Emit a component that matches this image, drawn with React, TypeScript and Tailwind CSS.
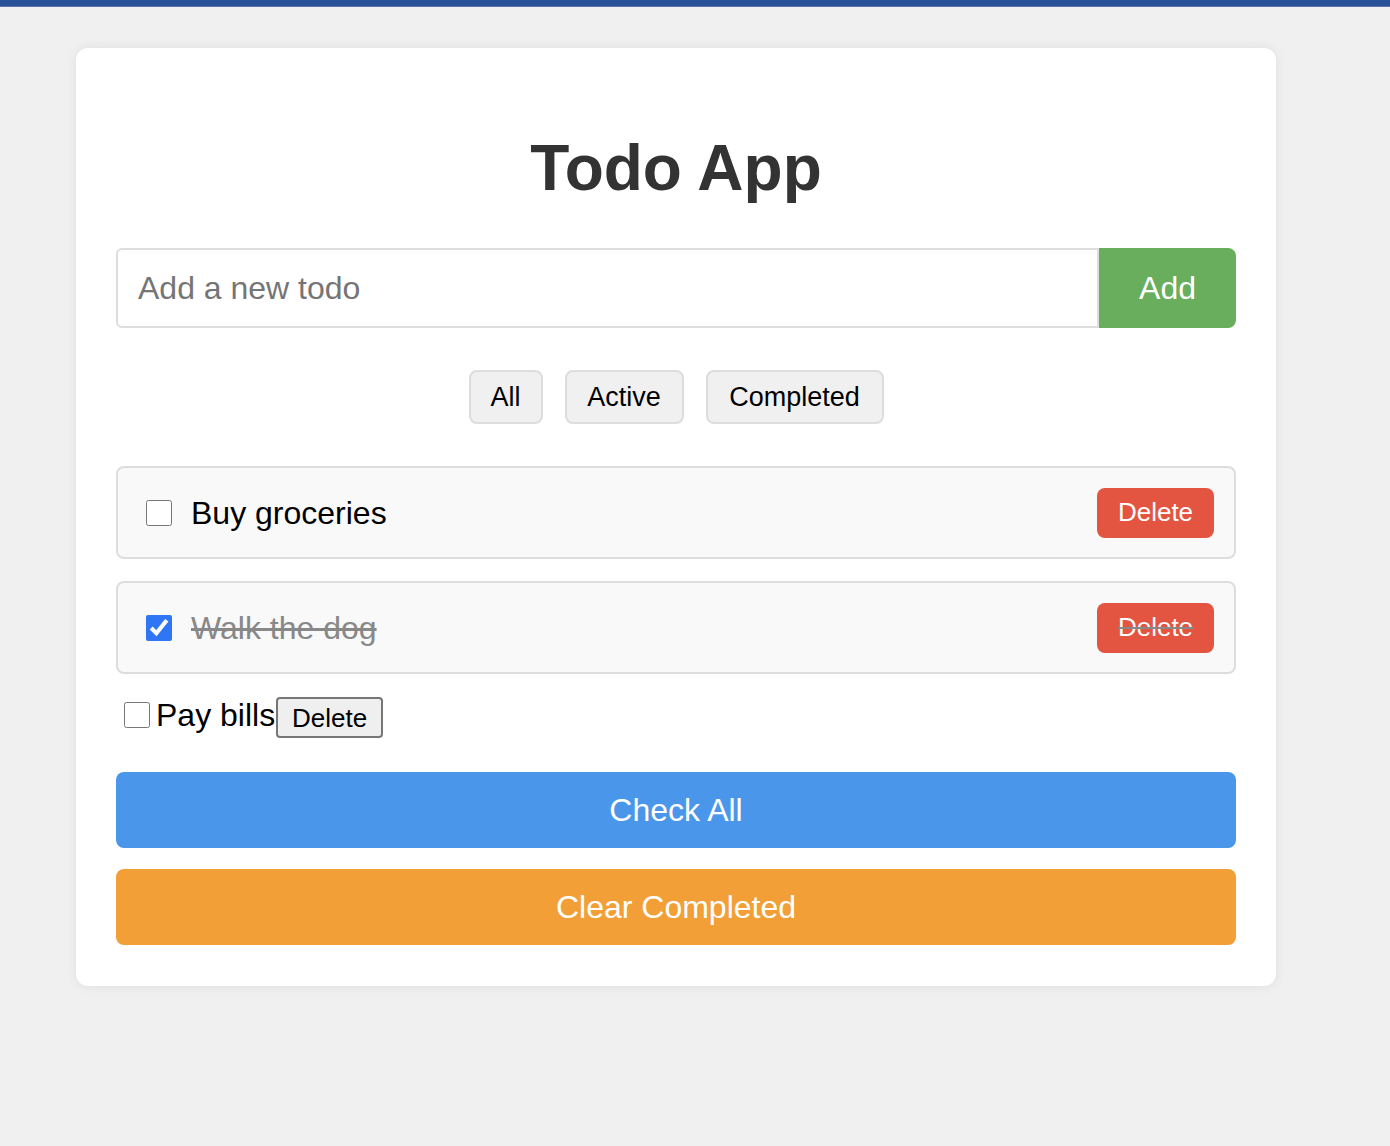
import { useState } from 'react';

type Todo = { id: number; text: string; done: boolean };

export default function App() {
  const [todos, setTodos] = useState<Todo[]>([
    { id: 1, text: 'Buy groceries', done: false },
    { id: 2, text: 'Walk the dog', done: true },
  ]);
  const [payDone, setPayDone] = useState(false);

  const toggle = (id: number) =>
    setTodos(todos.map((t) => (t.id === id ? { ...t, done: !t.done } : t)));

  return (
    <div className="min-h-[1146px] bg-[#f0f0f0] font-['Liberation_Sans',Arial,sans-serif]">
      {/* Top bar */}
      <div className="h-[6px] bg-[#2a5298]" />
      <div className="h-[1px] bg-[#5876ab]" />

      <div className="ml-[76px] mt-[41px] w-[1200px] rounded-[12px] bg-white px-[40px] pt-[40px] pb-[41px] shadow-[0_0_12px_rgba(0,0,0,0.08)]">
        <h1 className="mt-[43px] mb-[43px] text-center text-[64px] font-bold leading-[74px] text-[#333]">
          Todo App
        </h1>

        {/* Input row */}
        <div className="flex h-[80px]">
          <input
            type="text"
            placeholder="Add a new todo"
            className="min-w-0 flex-1 rounded-l-[6px] border-2 border-[#ddd] px-[20px] text-[32px] text-[#333] placeholder:text-[#757575] outline-none"
          />
          <button className="w-[137px] rounded-r-[8px] bg-[#68ae5c] text-[32px] text-white">
            Add
          </button>
        </div>

        {/* Filters */}
        <div className="mt-[42px] flex justify-center gap-[22px]">
          <button className="h-[54px] w-[74px] rounded-[8px] border-2 border-[#ddd] bg-[#f0f0f0] text-[27px] text-black">
            All
          </button>
          <button className="h-[54px] w-[119px] rounded-[8px] border-2 border-[#ddd] bg-[#f0f0f0] text-[27px] text-black">
            Active
          </button>
          <button className="h-[54px] w-[178px] rounded-[8px] border-2 border-[#ddd] bg-[#f0f0f0] text-[27px] text-black">
            Completed
          </button>
        </div>

        {/* Todo list */}
        <div className="mt-[42px]">
          {todos.map((t) => (
            <div
              key={t.id}
              className={`mb-[22px] flex h-[93px] items-center rounded-[8px] border-2 border-[#ddd] bg-[#f9f9f9] pl-[28px] pr-[20px] ${
                t.done ? 'text-[#888] line-through' : 'text-black'
              }`}
            >
              <input
                type="checkbox"
                checked={t.done}
                onChange={() => toggle(t.id)}
                className="m-0 h-[26px] w-[26px] accent-[#2f76f5]"
              />
              <span className="ml-[19px] flex-1 text-[32px]">{t.text}</span>
              <button
                className={`h-[50px] w-[117px] rounded-[8px] bg-[#e35441] text-[26px] text-white ${
                  t.done ? 'line-through decoration-[#888]' : ''
                }`}
              >
                Delete
              </button>
            </div>
          ))}

          <div className="flex h-[45px] items-center">
            <input
              type="checkbox"
              checked={payDone}
              onChange={() => setPayDone(!payDone)}
              className="mb-[7px] ml-[8px] mr-[6px] h-[26px] w-[26px] accent-[#2f76f5]"
            />
            <span className="mb-[7px] text-[32px] text-black">Pay bills</span>
            <button className="ml-[1px] mb-[2px] h-[41px] w-[107px] rounded-[4px] border-2 border-[#767676] bg-[#efefef] text-[26px] text-black">
              Delete
            </button>
          </div>
        </div>

        <button className="mt-[31px] block h-[76px] w-full rounded-[8px] bg-[#4a96ea] text-[32px] text-white">
          Check All
        </button>
        <button className="mt-[21px] block h-[76px] w-full rounded-[8px] bg-[#f29f38] text-[32px] text-white">
          Clear Completed
        </button>
      </div>
    </div>
  );
}
